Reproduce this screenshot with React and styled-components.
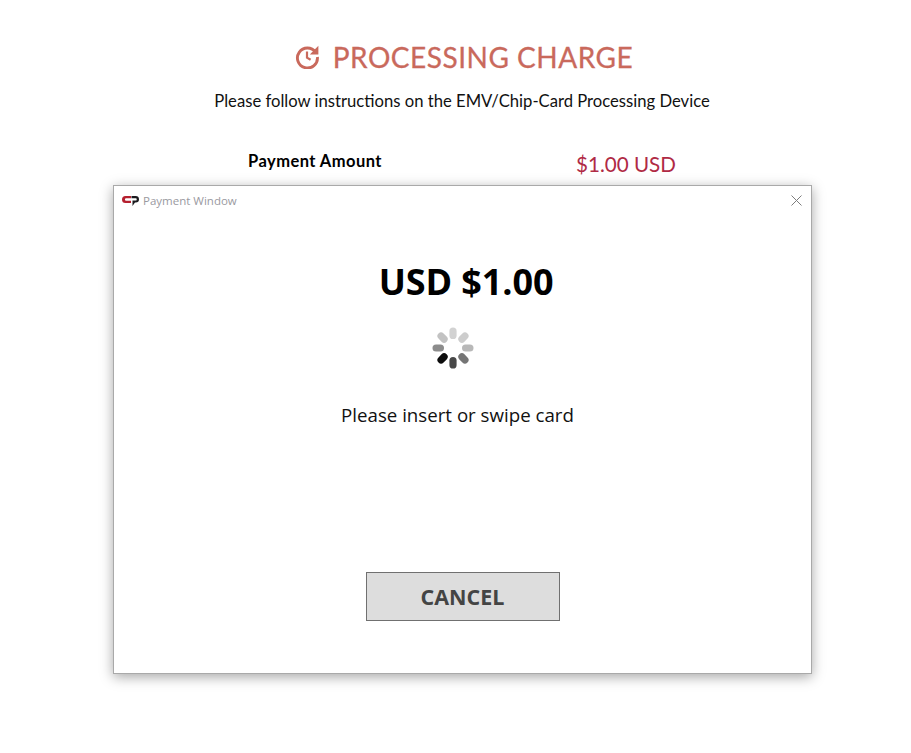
import React from "react";
import styled, { createGlobalStyle } from "styled-components";

const Global = createGlobalStyle`
  html, body { margin: 0; padding: 0; background: #fff; }
  body { font-family: "Lato", "Liberation Sans", sans-serif; }
`;
const Page = styled.div`
  position: relative;
  width: 911px;
  height: 753px;
  overflow: hidden;
  background: #fff;
`;
const Header = styled.header`
  display: flex;
  flex-direction: column;
  align-items: center;
  padding-top: 39px;
`;
const Title = styled.h1`
  display: flex;
  align-items: center;
  gap: 14px;
  margin: 0;
  height: 36px;
  padding-left: 17px;
  font: 400 28px/36px "Lato", sans-serif;
  color: #c9695c;
  letter-spacing: 0.52px;
  -webkit-text-stroke: 0.3px #c9695c;
`;
const Subtitle = styled.p`
  margin: 15px 0 0;
  padding-left: 13px;
  font: 400 16.65px/22px "Lato", sans-serif;
  color: #111;
`;
const AmountRow = styled.div`
  display: grid;
  grid-template-columns: 248px auto;
  padding: 38px 0 0 248px;
  align-items: start;
`;
const AmountLabel = styled.span`
  font: 700 16.5px/22px "Lato", sans-serif;
  letter-spacing: 0.45px;
  color: #000;
`;
const AmountValue = styled.span`
  margin: 1px 0 0 80px;
  font: 400 20.6px/26px "Lato", sans-serif;
  color: #b02a45;
`;
const Modal = styled.section`
  position: absolute;
  left: 113px;
  top: 185px;
  width: 699px;
  height: 489px;
  box-sizing: border-box;
  border: 1px solid #a9a9a9;
  background: #fff;
  box-shadow: 0 3px 12px rgba(0, 0, 0, 0.35);
  display: flex;
  flex-direction: column;
`;
const TitleBar = styled.div`
  display: flex;
  align-items: center;
  height: 29px;
  padding: 0 9px 0 8px;
  flex: none;
`;
const WindowTitle = styled.span`
  margin-left: 4px;
  font: 400 11.5px/16px "Open Sans", sans-serif;
  color: #9a9a9f;
  flex: 1;
`;
const Body = styled.div`
  display: flex;
  flex-direction: column;
  align-items: center;
  flex: 1;
  font-family: "Open Sans", sans-serif;
`;
const Price = styled.div`
  margin-top: 43px;
  font: 700 36px/48px "Open Sans", sans-serif;
  letter-spacing: -0.1px;
  color: #000;
  padding-left: 7px;
`;
const Spinner = styled.svg`
  display: block;
  margin: 21px 0 0 -19px;
`;
const Prompt = styled.div`
  margin: 32px 0 0 -10px;
  font: 400 18.7px/28px "Open Sans", sans-serif;
  color: #111;
`;
const CancelButton = styled.button`
  margin: 143px 0 0 0;
  width: 194px;
  height: 49px;
  box-sizing: border-box;
  border: 1px solid #707070;
  background: #dddddd;
  color: #444;
  font: 700 21.5px/1 "Open Sans", sans-serif;
  padding: 0;
`;

const RefreshClock = () => (
  <svg width="24" height="24" viewBox="0 0 24 24" fill="none" stroke="#c9695c" strokeWidth="2.9" aria-hidden="true">
    <path d="M20.6 7.2A10 10 0 1 0 22.4 12" />
    <path d="M23.4 .8v8.6h-8.6z" fill="#c9695c" stroke="none" />
    <path d="M12 6.6v6l3.6 2.2" strokeWidth="2.2" />
  </svg>
);

const Logo = () => (
  <svg width="17" height="10" viewBox="0 0 17 10" aria-hidden="true">
    <path d="M9 0H3.5a3.5 3.5 0 0 0 0 7H9V4.8H4.2a1.3 1.3 0 0 1 0-2.6H9z" fill="#b5202f" />
    <path d="M9.5 0H13.6A3.4 3.4 0 0 1 17 3.3 3.3 3.3 0 0 1 13.6 6.6H13L10.5 10V4.6H13.8c.6 0 .9-.5.9-1.2s-.4-1.2-.9-1.2H9.5z" fill="#1b1b1f" />
  </svg>
);

const Close = () => (
  <svg width="11" height="11" viewBox="0 0 11 11" stroke="#7d7d7d" strokeWidth="1" aria-hidden="true">
    <path d="M.5.5l10 10M10.5.5l-10 10" />
  </svg>
);

const SPOKES = [
  [0, "#d2d2d2"],
  [45, "#cdcdcd"],
  [90, "#b8b8b8"],
  [135, "#757575"],
  [180, "#484848"],
  [225, "#0c0c0c"],
  [270, "#8c8c8c"],
  [315, "#c2c2c2"],
];

const LoadingSpinner = () => (
  <Spinner width="42" height="42" viewBox="-21 -21 42 42" aria-hidden="true">
    {SPOKES.map(([angle, color]) => (
      <rect key={angle} x="-3.6" y="-20.5" width="7.2" height="11.5" rx="3.6" fill={color} transform={`rotate(${angle})`} />
    ))}
  </Spinner>
);

export default function App() {
  return (
    <Page>
      <Global />
      <Header>
        <Title>
          <RefreshClock />
          PROCESSING CHARGE
        </Title>
        <Subtitle>Please follow instructions on the EMV/Chip-Card Processing Device</Subtitle>
      </Header>
      <AmountRow>
        <AmountLabel>Payment Amount</AmountLabel>
        <AmountValue>$1.00 USD</AmountValue>
      </AmountRow>
      <Modal>
        <TitleBar>
          <Logo />
          <WindowTitle>Payment Window</WindowTitle>
          <Close />
        </TitleBar>
        <Body>
          <Price>USD $1.00</Price>
          <LoadingSpinner />
          <Prompt>Please insert or swipe card</Prompt>
          <CancelButton>CANCEL</CancelButton>
        </Body>
      </Modal>
    </Page>
  );
}
